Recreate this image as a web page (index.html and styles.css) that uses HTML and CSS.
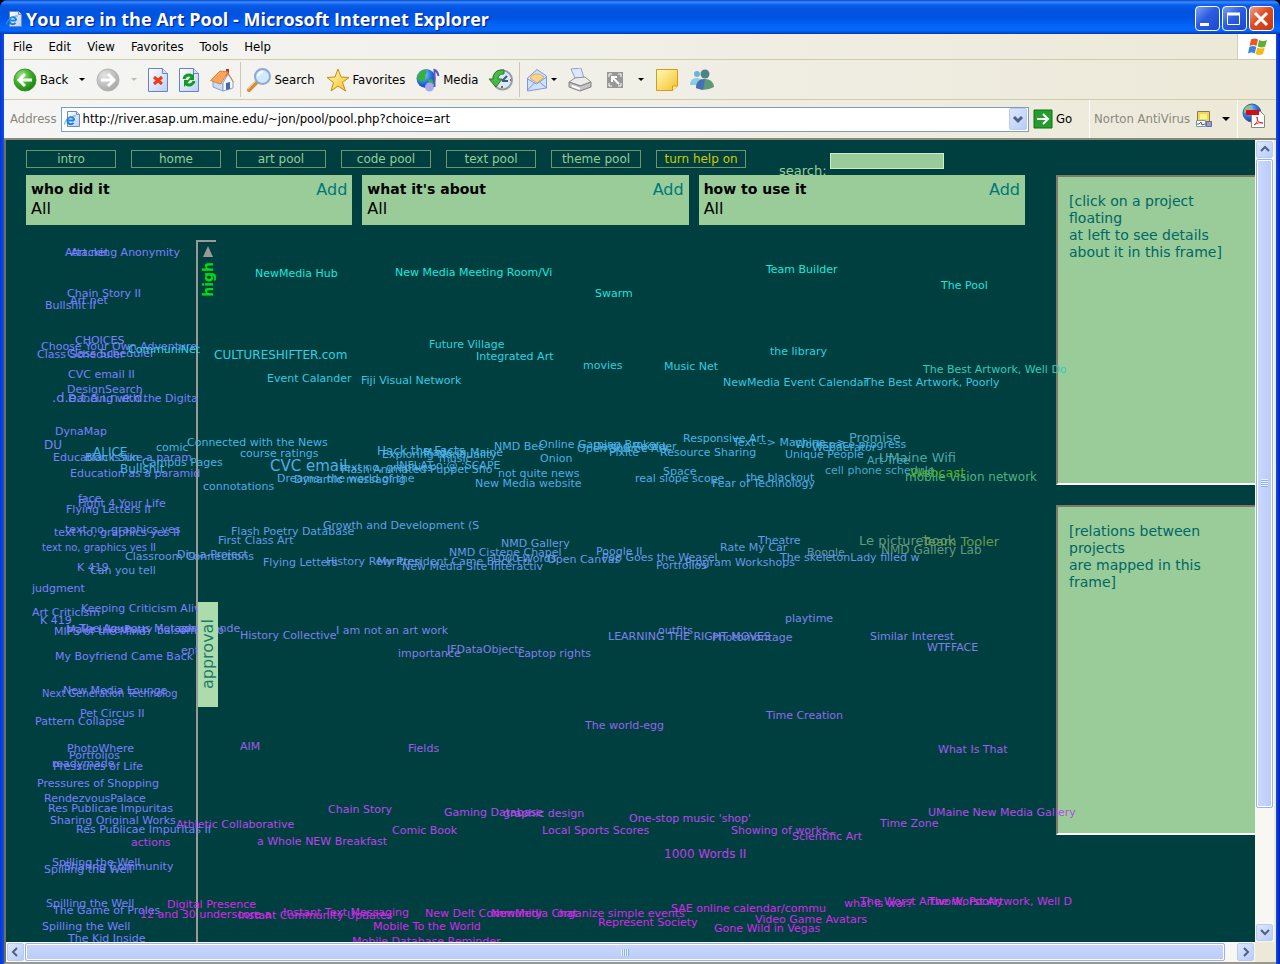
FILE: index.html
```html
<!DOCTYPE html>
<html lang="en">

<head>
  <title>You are in the Art Pool</title>
  <meta charset="utf-8" />
  <meta name="viewport" content="width=device-width, initial-scale=1.0" />
  <link rel="stylesheet" href="styles.css">
</head>

<body>
  <svg width="0" height="0" class="defs" aria-hidden="true">
    <defs>
      <radialGradient id="green" cx=".35" cy=".3" r=".8">
        <stop offset="0" stop-color="#a5e58c" />
        <stop offset=".5" stop-color="#3cb024" />
        <stop offset="1" stop-color="#14790c" />
      </radialGradient>
      <radialGradient id="grey" cx=".35" cy=".3" r=".8">
        <stop offset="0" stop-color="#e4e4e4" />
        <stop offset="1" stop-color="#a2a2a2" />
      </radialGradient>
      <radialGradient id="globe" cx=".35" cy=".3" r=".8">
        <stop offset="0" stop-color="#9cd4ff" />
        <stop offset=".5" stop-color="#2c7be0" />
        <stop offset="1" stop-color="#0a2c96" />
      </radialGradient>
      <linearGradient id="paper" x1="0" y1="0" x2="1" y2="1">
        <stop offset="0" stop-color="#ffffff" />
        <stop offset="1" stop-color="#b9d0fa" />
      </linearGradient>
      <linearGradient id="gold" x1="0" y1="0" x2="1" y2="1">
        <stop offset="0" stop-color="#fffbb8" />
        <stop offset="1" stop-color="#f6c02a" />
      </linearGradient>
    </defs>
    <symbol id="ie" viewBox="0 0 16 16">
      <path d="M3.500.5h9l3 3v12h-12z" fill="url(#paper)" stroke="#7587b5" />
      <path d="M12.500.5v3h3" fill="#dfe8fb" stroke="#7587b5" />
      <path d="M10 9.500H4.500M10.300 9.500a3.500 3.500 0 1 0-.8 2.400" fill="none" stroke="#1c7fd8" stroke-width="2" />
      <path d="M.8 13.500C-.2 10 6 4.500 12 5" fill="none" stroke="#3fa3ea" stroke-width="1" />
    </symbol>
  </svg>

  <div class="window">
    <header class="titlebar">
      <svg class="icon16"><use href="#ie" /></svg>
      <h1>You are in the Art Pool - Microsoft Internet Explorer</h1>
      <button class="win-btn" aria-label="Minimize"><svg width="22" height="22"><path d="M4 16.500h9" stroke="#fff" stroke-width="3" /></svg></button>
      <button class="win-btn" aria-label="Maximize"><svg width="22" height="22"><path d="M4.500 5.500h12v11h-12z" fill="none" stroke="#fff" /><path d="M4 6h13" stroke="#fff" stroke-width="3" /></svg></button>
      <button class="win-btn close" aria-label="Close"><svg width="22" height="22"><path d="M5 5l12 12M17 5L5 17" stroke="#fff" stroke-width="3" /></svg></button>
    </header>

    <nav class="menubar">
      <button>File</button>
      <button>Edit</button>
      <button>View</button>
      <button>Favorites</button>
      <button>Tools</button>
      <button>Help</button>
      <span class="flag">
        <svg width="20" height="18" viewBox="0 0 20 18">
          <path d="M3 1.500q3.500-2 7 0L8.500 8q-3-1.800-7 0z" fill="#e8582c" />
          <path d="M11 2q4 1.800 8 0l-1.800 6.500q-3.500 1.800-7.500 0z" fill="#5fb030" />
          <path d="M1.300 9q3.500-1.800 7 0l-1.600 6.500q-3-2-6.700 0z" fill="#3f83dc" />
          <path d="M9.300 9.500q4 1.800 7.500 0L15 16q-4 1.800-7.400 0z" fill="#f3b91c" />
        </svg>
      </span>
    </nav>

    <div class="toolbar">
      <button>
        <svg width="24" height="24"><circle cx="12" cy="12" r="11" fill="url(#green)" stroke="#3c9430" /><path d="M19 12H7M12 6l-6 6 6 6" fill="none" stroke="#fff" stroke-width="3" /></svg>
        Back
      </button>
      <button aria-label="Back history"><i class="caret"></i></button>
      <button aria-label="Forward"><svg width="24" height="24"><circle cx="12" cy="12" r="11" fill="url(#grey)" stroke="#b4b4b4" /><path d="M5 12h12M12 6l6 6-6 6" fill="none" stroke="#fff" stroke-width="3" /></svg></button>
      <button aria-label="Forward history"><i class="caret off"></i></button>
      <button aria-label="Stop"><svg width="20" height="24"><path d="M.5.500h14l5 5v18H.500z" fill="url(#paper)" stroke="#6b80c8" /><path d="M14.500.500v5h5" fill="#d5e0fa" stroke="#6b80c8" /><path d="M6 9l8 7M14 9l-8 7" stroke="#f03a10" stroke-width="3" /></svg></button>
      <button aria-label="Refresh"><svg width="20" height="24"><path d="M.5.500h14l5 5v18H.500z" fill="url(#paper)" stroke="#6b80c8" /><path d="M14.500.500v5h5" fill="#d5e0fa" stroke="#6b80c8" /><path d="M5 11c1-4 5-5 8-3M15 13c-1 4-5 5-8 3" fill="none" stroke="#159a1c" stroke-width="3" /><path d="M15 5v7h-6zM5 19v-7h6z" fill="#159a1c" /></svg></button>
      <button aria-label="Home"><svg width="24" height="24"><path d="M16 1h3v7h-3z" fill="#c03018" /><path d="M3 12l10 4v7L3 19z" fill="#c9dcf8" stroke="#8aa0cc" /><path d="M13 15l5-9 5 8v6l-10 3z" fill="#f4f8ff" stroke="#8aa0cc" /><path d="M.5 12.500L10 3l8 1-6 10-2 2z" fill="#f8a45c" stroke="#dc8440" /><path d="M17.500 4l6 10" stroke="#dc8440" stroke-width="1" /><path d="M16 15l4-1v7l-4 1z" fill="#4a68b0" /></svg></button>
      <span class="sep"></span>
      <button>
        <svg width="24" height="24"><path d="M2 22l8-8" stroke="#d98a3e" stroke-width="4" stroke-linecap="round" /><path d="M1 21l8-8" stroke="#f5c896" stroke-width="1" /><circle cx="15.500" cy="8.500" r="7.500" fill="#cfeafd" stroke="#8fa6d8" stroke-width="2" /><path d="M11 8q1-4 5-4" fill="none" stroke="#fff" stroke-width="2" /></svg>
        Search
      </button>
      <button>
        <svg width="24" height="24"><path d="M12 1l3 8 8 .5-6.500 5 3 8.500-7.500-5-7 5 2.500-8.500L1 9.500 9 9z" fill="url(#gold)" stroke="#c98a10" /></svg>
        Favorites
      </button>
      <button>
        <svg width="24" height="24"><circle cx="10" cy="10.500" r="9.500" fill="url(#globe)" /><path d="M4 4c4-4 8-2 6 2s1 5-3 7-6-3-6-4zM12 12l4-1 2 4-4 3z" fill="#35b03c" /><circle cx="13.500" cy="19" r="4.500" fill="#aaa6f0" /><path d="M18.500 19V2q3 1 4 6" fill="none" stroke="#5a58b8" stroke-width="2" /></svg>
        Media
      </button>
      <button aria-label="History"><svg width="24" height="24"><circle cx="13.500" cy="12" r="9.500" fill="#d4ecf8" stroke="#94a0a8" stroke-width="2" /><path d="M13 13l5-5M13 13h6" fill="none" stroke="#46586c" stroke-width="2" /><path d="M13 18v2M21 12h1" stroke="#e03a20" stroke-width="2" /><path d="M15 2C7 1 4 6 4 11H0l7 8 6-8H9c0-3 2-5 6-5z" fill="#4db848" stroke="#257a28" /></svg></button>
      <span class="sep"></span>
      <button aria-label="Mail"><svg width="22" height="24"><path d="M1.500 10L11 1.500 20.500 8v12l-19 3z" fill="#cfe2fc" stroke="#8296d8" /><path d="M4 10q5-8 14-1l-7 6z" fill="#fbd489" stroke="#e0a860" /><path d="M1.500 11l9 5 10-7M1.500 22l7-7M20.500 20l-7-6" fill="none" stroke="#8296d8" /></svg><i class="caret"></i></button>
      <button aria-label="Print"><svg width="24" height="24"><path d="M3 1l10-1 3 10H7z" fill="#dbe8ff" stroke="#8fa3cf" /><path d="M1 14l6-4 10-1 6 5-10 4z" fill="#ececec" stroke="#909090" /><path d="M1 14v5l11 4 11-4v-5l-11 4z" fill="#c4c4c4" stroke="#808080" /><path d="M4 18l8 3" stroke="#fff" stroke-width="2" /></svg></button>
      <button aria-label="Size"><svg width="24" height="24"><path d="M4 4h16v16H4z" fill="#989898" /><path d="M9 9l7 7M9 14V9h5" fill="none" stroke="#fff" stroke-width="2" /><path d="M6 9V6h3M15 6h3v3M6 15v3h3M15 18h3v-3" fill="none" stroke="#fff" /></svg></button>
      <button aria-label="Size options"><i class="caret"></i></button>
      <button aria-label="Discuss"><svg width="24" height="24"><path d="M1.500 1.500h21V18l-5 4.500h-16z" fill="url(#gold)" stroke="#d99a1c" /><path d="M17.500 22.500V18h5" fill="#fff3b0" stroke="#d99a1c" /></svg></button>
      <button aria-label="Messenger"><svg width="24" height="24"><circle cx="7" cy="6" r="3" fill="#6db3d8" /><path d="M0 17q0-7 7-7 6 0 6 7z" fill="#8ccbe4" /><circle cx="15" cy="6" r="4.500" fill="#4d8288" /><path d="M6 20q0-9 9-9 8 0 9 8-9 5-18 1z" fill="#5a9a78" /><path d="M6 20q0-9 9-9l-2 11z" fill="#4470b8" /></svg></button>
    </div>

    <div class="addressbar">
      <label for="address">Address</label>
      <div class="combo">
        <svg class="icon16"><use href="#ie" /></svg>
        <input id="address" type="text" value="http://river.asap.um.maine.edu/~jon/pool/pool.php?choice=art">
        <button class="xp-btn" aria-label="Show addresses"><svg width="16" height="20"><path d="M4 8l4 4 4-4" fill="none" stroke="#4d6185" stroke-width="3" /></svg></button>
      </div>
      <button class="go">
        <svg width="20" height="20"><path d="M1 1h18v18H1z" fill="#259c2c" stroke="#117018" /><path d="M4 10h10M10 5l5 5-5 5" fill="none" stroke="#fff" stroke-width="2" /></svg>
        Go
      </button>
      <div class="norton">
        Norton AntiVirus
        <svg width="16" height="16"><path d="M1.500.500h12v10h-12z" fill="#f0d850" stroke="#8a7a60" /><path d="M4 3h7v5H4z" fill="#fff28c" /><path d="M.500 9.500h9v6h-9z" fill="#fff" stroke="#48a8dc" /><path d="M1 13h2l2-2 1 3 3-1" fill="none" stroke="#e02818" /><path d="M10.500 10.500h5v5h-5z" fill="#9c9cc8" stroke="#6a6a98" /></svg>
        <i class="caret"></i>
      </div>
      <div class="pdf">
        <svg width="24" height="26"><circle cx="10" cy="10" r="9" fill="url(#globe)" stroke="#49618c" /><path d="M5 3q5-2 6 1l-4 4-5 2q0-5 3-7z" fill="#8cbf8c" /><path d="M9.500 8.500h9l4 4v12h-13z" fill="#fff" stroke="#888" /><path d="M4 7h13v5H4z" fill="#d40d14" /><path d="M12 22c4-3 4-6 3-8 0 4 2 6 6 6-3-1-6 0-9 2z" fill="none" stroke="#e0242c" /></svg>
      </div>
    </div>

    <div class="viewport">
      <div class="page">
        <main>
          <div class="topnav">
            <a href="#">intro</a>
            <a href="#">home</a>
            <a href="#">art pool</a>
            <a href="#">code pool</a>
            <a href="#">text pool</a>
            <a href="#">theme pool</a>
            <a href="#" class="help">turn help on</a>
            <form class="search">
              <label for="search">search:</label>
              <input id="search" type="text">
            </form>
          </div>
          <div class="filters">
            <section>
              <h2>who did it</h2><a href="#">Add</a>
              <p>All</p>
            </section>
            <section>
              <h2>what it's about</h2><a href="#">Add</a>
              <p>All</p>
            </section>
            <section>
              <h2>how to use it</h2><a href="#">Add</a>
              <p>All</p>
            </section>
          </div>
          <div class="pool" id="pool">
            <div class="axis">
              <svg width="10" height="11"><path d="M5 0l5 11H0z" fill="#999" /></svg>
              <span>high</span>
            </div>
            <div class="approval">approval</div>
          </div>
        </main>
        <aside>
          <div class="frame details">[click on a project floating<br>at left to see details about it in this frame]</div>
          <div class="frame relations">[relations between projects<br>are mapped in this frame]</div>
        </aside>
      </div>

      <div class="scroll vertical">
        <button class="xp-btn" aria-label="Scroll up"><svg width="14" height="15"><path d="M3 9l4-4 4 4" fill="none" stroke="#4d6185" stroke-width="2" /></svg></button>
        <div class="thumb"><i></i></div>
        <div class="rest"></div>
        <button class="xp-btn" aria-label="Scroll down"><svg width="14" height="15"><path d="M3 5l4 4 4-4" fill="none" stroke="#4d6185" stroke-width="2" /></svg></button>
      </div>
      <div class="scroll horizontal">
        <button class="xp-btn" aria-label="Scroll left"><svg width="15" height="14"><path d="M9 3L5 7l4 4" fill="none" stroke="#4d6185" stroke-width="2" /></svg></button>
        <div class="thumb"><i></i></div>
        <div class="rest"></div>
        <button class="xp-btn" aria-label="Scroll right"><svg width="15" height="14"><path d="M6 3l4 4-4 4" fill="none" stroke="#4d6185" stroke-width="2" /></svg></button>
      </div>
      <div class="corner"></div>
    </div>
  </div>

  <script src="pool.js"></script>
</body>

</html>
```

FILE: styles.css
```css
* {
  box-sizing: border-box;
}

body {
  margin: 0;
  background: #000;
  font-family: "DejaVu Sans", Verdana, sans-serif;
}

button {
  border: 0;
  padding: 0;
  background: none;
  font: inherit;
  color: inherit;
}

svg {
  display: block;
  flex: none;
}

a {
  text-decoration: none;
  color: inherit;
}

.defs {
  position: absolute;
}

.window {
  display: flex;
  flex-direction: column;
  height: 100vh;
  padding: 0 4px;
  border-radius: 8px 8px 0 0;
  overflow: hidden;
  background: linear-gradient(90deg, #0831d9, #0855dd 4px, #0855dd calc(100% - 4px), #0019c0);
}

.icon16 {
  width: 16px;
  height: 16px;
}

/* title bar */

.titlebar {
  display: flex;
  align-items: center;
  gap: 2px;
  height: 34px;
  margin: 0 -4px;
  padding: 3px 6px 0;
  background: linear-gradient(#0845c8, #3b8cff 2px, #0a5cea 5px, #0153e0 10px, #0054e3 18px, #0468fd 28px, #0464f8 31px, #0038b0);
}

.titlebar h1 {
  flex: 1;
  margin: 0 0 0 2px;
  font: bold 18px/26px "Open Sans", "Trebuchet MS", sans-serif;
  color: #fff;
  text-shadow: 1px 1px 1px #0a1883;
}

.win-btn {
  width: 25px;
  height: 25px;
  border: 1px solid #fff;
  border-radius: 4px;
  background: linear-gradient(135deg, #7ba2f0, #2c5ce0 45%, #1c48d0);
}

.win-btn.close {
  background: linear-gradient(135deg, #f0a088, #dc4c24 45%, #c43810);
}

/* browser bars */

.menubar,
.toolbar,
.addressbar {
  display: flex;
  align-items: center;
  font: 13px/16px "DejaVu Sans Condensed", Tahoma, sans-serif;
  background: linear-gradient(90deg, #f5f5f4, #ece9d8);
}

.menubar {
  height: 25px;
  gap: 16px;
  padding-left: 9px;
}

.flag {
  display: flex;
  align-items: center;
  align-self: stretch;
  margin-left: auto;
  padding: 0 8px 0 10px;
  border-left: 1px solid #d0cdb8;
  background: #fff;
}

.toolbar {
  height: 40px;
  gap: 11px;
  padding-left: 9px;
  border-top: 1px solid #d0cba8;
}

.toolbar button,
.go {
  display: flex;
  align-items: center;
  gap: 3px;
}

.sep {
  align-self: stretch;
  width: 1px;
  margin: 2px -5px;
  background: #cdc9b0;
}

.caret {
  border: 3px solid transparent;
  border-top: 3px solid #000;
  border-bottom: 0;
}

.caret.off {
  border-top-color: #bbb;
}

.addressbar {
  height: 41px;
  gap: 4px;
  padding-left: 6px;
  border-top: 1px solid #d0cba8;
  border-bottom: 2px solid #8a8878;
}

.addressbar label,
.norton {
  color: #8a887c;
}

.combo {
  display: flex;
  flex: 1;
  align-items: center;
  gap: 3px;
  height: 25px;
  padding: 1px 1px 1px 2px;
  border: 1px solid #7f9db9;
  background: #fff;
}

.combo input {
  flex: 1;
  border: 0;
  padding: 0;
  outline: 0;
  background: none;
  font: inherit;
}

.xp-btn {
  display: flex;
  align-items: center;
  justify-content: center;
  border: 1px solid #b8ccf0;
  border-radius: 2px;
  background: linear-gradient(135deg, #dce6ff, #b9cdf8);
}

.go {
  width: 52px;
}

.norton,
.pdf {
  display: flex;
  align-items: center;
  align-self: stretch;
  gap: 6px;
  padding-left: 4px;
  border-left: 1px solid #fff;
}

.norton {
  width: 144px;
}

.norton .caret {
  margin-left: 4px;
  border-width: 4px 4px 0;
}

.pdf {
  width: 39px;
  padding-bottom: 6px;
}

/* viewport with its scrollbars */

.viewport {
  flex: 1;
  display: grid;
  grid-template: minmax(0, 1fr) 20px / minmax(0, 1fr) 19px;
  min-height: 0;
  padding-right: 2px;
  border-left: 2px solid #706e60;
  border-bottom: 2px solid #9a988a;
  background: #ece9d8;
}

.scroll {
  display: flex;
  gap: 1px;
  padding: 1px;
  background: #f8f7f2;
}

.scroll .xp-btn {
  flex: none;
}

.vertical {
  flex-direction: column;
}

.vertical .xp-btn {
  height: 17px;
}

.horizontal .xp-btn {
  width: 17px;
}

.thumb {
  display: flex;
  align-items: center;
  justify-content: center;
  border: 1px solid #98b4ea;
  border-radius: 2px;
  box-shadow: inset 0 0 0 1px #fff;
}

.vertical .thumb {
  flex: 650;
  background: linear-gradient(90deg, #cbd8fd, #b8cbf8);
}

.vertical .rest {
  flex: 115;
}

.vertical i {
  width: 7px;
  height: 8px;
  background: repeating-linear-gradient(#eef4fe 0 1px, #8cb0f8 1px 2px);
}

.horizontal .thumb {
  flex: 1200;
  background: linear-gradient(#cbd8fd, #b8cbf8);
}

.horizontal .rest {
  flex: 10;
}

.horizontal i {
  width: 8px;
  height: 7px;
  background: repeating-linear-gradient(90deg, #eef4fe 0 1px, #8cb0f8 1px 2px);
}

.corner {
  background: #ece9d8;
}

/* the pool page */

.page {
  display: flex;
  gap: 31px;
  padding-left: 20px;
  overflow: hidden;
  background: #003f3f;
  color: #99cc99;
}

main {
  position: relative;
  z-index: 1;
  flex: 1;
  display: flex;
  flex-direction: column;
  min-width: 0;
}

.topnav {
  display: flex;
  align-items: flex-start;
  gap: 15px;
  height: 35px;
  padding-top: 10px;
}

.topnav a {
  flex: 0 0 90px;
  border: 1px solid #6f9570;
  font-size: 12px;
  line-height: 16px;
  text-align: center;
}

.topnav .help {
  color: #cccc00;
}

.search {
  display: flex;
  gap: 3px;
  margin: 3px 0 0 18px;
}

.search label {
  padding-top: 9px;
  font-size: 13px;
  line-height: 17px;
}

.search input {
  width: 114px;
  height: 16px;
  border: 1px solid #cceecc;
  background: #99cc99;
}

.filters {
  position: relative;
  display: flex;
  gap: 10px;
}

.filters section {
  flex: 1;
  display: grid;
  grid-template-columns: 1fr auto;
  align-content: start;
  height: 50px;
  padding: 5px;
  background: #99cc99;
  color: #000;
}

.filters h2,
.filters p {
  margin: 0;
  line-height: 19px;
}

.filters h2 {
  font-size: 14px;
}

.filters p {
  font-size: 16px;
}

.filters a {
  font-size: 16px;
  line-height: 19px;
  color: #007777;
}

aside {
  flex: 0 0 199px;
  display: flex;
  flex-direction: column;
  gap: 20px;
  padding-top: 35px;
}

.frame {
  min-height: 310px;
  padding: 16px 30px 16px 11px;
  border: 2px solid #807868;
  border-right: 0;
  border-bottom-color: #fff;
  background: #99cc99;
  color: #006666;
  font-size: 14px;
  line-height: 17px;
}

.relations {
  min-height: 330px;
}

.pool {
  position: relative;
  flex: 1;
  margin-top: 10px;
}

.axis {
  position: absolute;
  left: 170px;
  top: 5px;
  bottom: 0;
  width: 20px;
  border-left: 2px solid #999;
  border-top: 2px solid #999;
}

.axis svg {
  margin: 4px 0 0 5px;
}

.axis span,
.approval {
  writing-mode: vertical-rl;
  transform: rotate(180deg);
  line-height: 20px;
}

.axis span {
  display: block;
  width: 20px;
  margin-top: 5px;
  font-size: 14px;
  font-weight: bold;
  color: #00dd11;
}

.approval {
  position: absolute;
  z-index: 1;
  left: 172px;
  top: 367px;
  height: 105px;
  width: 20px;
  font-size: 16px;
  text-align: center;
  background: #acdcac;
  color: #1a7a6a;
}

.project {
  position: absolute;
  font-size: 11px;
  line-height: 14px;
  white-space: nowrap;
}

.project.s10 {
  font-size: 10px;
}

.project.s12 {
  font-size: 12px;
}

.project.s13 {
  font-size: 13px;
}

.project.s15 {
  font-size: 15px;
}
```

FILE: pool.js
```js
// name, x, y, font size (11 by default), colour (by approval if missing)
const unrated = "#7b80ff";

const waiting = [
  ["Attacking Anonymity", 65, 252], ["Art.net", 71, 252],
  ["Chain Story II", 67, 293], ["Art.net", 70, 300], ["Bullshit II", 45, 305],
  ["CHOICES", 75, 340], ["Choose Your Own Adventure", 41, 346],
  ["Class Scheduler", 37, 354], ["Class Scheduler", 67, 353],
  ["CVC email II", 68, 374], ["DesignSearch", 67, 389],
  [".d.e.t.a.i.n.e.d.", 52, 397, 13], ["Dancing with the Digita", 68, 398],
  ["DynaMap", 55, 431], ["DU", 44, 444, 12],
  ["Education Is like a param", 53, 457], ["Education as a paramid", 70, 473],
  ["face", 78, 498], ["Fight 4 Your Life", 78, 503], ["Flying Letters II", 66, 509],
  ["text no, graphics yes", 65, 529], ["text no, graphics yes II", 54, 532],
  ["text no, graphics yes II", 42, 547, 10],
  ["K 419", 77, 567], ["judgment", 32, 588],
  ["Keeping Criticism Alive", 81, 608], ["Art Criticism", 32, 612],
  ["K 419", 40, 620], ["The Aqueous Metaphor", 79, 628],
  ["Make Like Putty", 66, 629], ["MIPS of the Mind", 54, 631],
  ["balsomypoo", 157, 630], ["My Boyfriend Came Back", 55, 656],
  ["New Media Lounge", 63, 690], ["Next Generation Technolog", 42, 693, 10],
  ["Pet Circus II", 80, 713], ["Pattern Collapse", 35, 721],
  ["PhotoWhere", 67, 748], ["Portfolios", 69, 755], ["readymade", 52, 763],
  ["Pressures of Life", 53, 766], ["Pressures of Shopping", 37, 783],
  ["RendezvousPalace", 44, 798], ["Res Publicae Impuritas", 48, 808],
  ["Sharing Original Works", 50, 820], ["Res Publicae Impuritas II", 76, 829],
  ["Spilling the Well", 52, 862], ["Sharing Community", 64, 866],
  ["Spilling the Well", 44, 869], ["Spilling the Well", 46, 903],
  ["The Game of Proles", 53, 910], ["Spilling the Well", 42, 926],
  ["The Kid Inside", 68, 938]
];

const projects = [
  ["NewMedia Hub", 255, 273], ["New Media Meeting Room/Vi", 395, 272],
  ["Team Builder", 766, 269], ["The Pool", 941, 285], ["Swarm", 595, 293],
  ["Future Village", 429, 344], ["CommuniNet", 128, 349],
  ["the library", 770, 351], ["CULTURESHIFTER.com", 214, 354, 12],
  ["Integrated Art", 476, 356], ["movies", 583, 365], ["Music Net", 664, 366],
  ["The Best Artwork, Well Do", 923, 369, 11, "#33ccb8"],
  ["Event Calander", 267, 378], ["Fiji Visual Network", 361, 380],
  ["NewMedia Event Calendar", 723, 382], ["The Best Artwork, Poorly", 864, 382],
  ["Promise", 849, 437, 13, "#4da6c0"], ["Responsive Art", 683, 438],
  ["Connected with the News", 187, 442], ["Text --> Machine -->", 733, 442],
  ["Workspace progress", 795, 444], ["Webaerator", 812, 447],
  ["Online Gaming Broker", 539, 444], ["Daring Reorder", 593, 446],
  ["NMD Bec", 494, 446], ["comic", 156, 447], ["Open Source Ark", 577, 448],
  ["Hack the Facts", 377, 450, 12], ["ALICE", 93, 451, 12],
  ["Made in Maine", 423, 452], ["Pixite", 609, 452],
  ["Resource Sharing", 660, 452], ["course ratings", 240, 453],
  ["Exploring Nonduality", 382, 454], ["Unique People", 785, 454],
  ["Black Sun", 85, 457], ["UMaine Wifi", 879, 457, 13, "#4da6a6"],
  ["Onion", 540, 458], ["music", 439, 458],
  ["Art Tree", 867, 460, 11, "#4da6b8"], ["Campus Pages", 142, 462],
  ["CVC email", 270, 465, 15], ["INFLAT:o;@ ;SCAPE", 396, 465],
  ["text no, graphics", 340, 467], ["Bullshit", 120, 468, 12],
  ["Flash Animated Puppet Sho", 341, 469],
  ["cell phone schedule", 825, 470, 11, "#4da6c8"], ["Space", 663, 471],
  ["mobile vision network", 905, 476, 12, "#4db380"],
  ["Webcast", 910, 472, 13, "#55aa22"],
  ["not quite news", 498, 473], ["the blackout", 746, 477],
  ["Dreams: the world of the", 277, 478], ["real slope scope", 635, 478],
  ["Dynamic messaging", 294, 479], ["New Media website", 475, 483],
  ["Fear of Technology", 712, 483], ["connotations", 203, 486],
  ["Growth and Development (S", 323, 525], ["Flash Poetry Database", 231, 531],
  ["First Class Art", 218, 540], ["Theatre", 758, 540],
  ["Le picturebook", 859, 540, 13, "#669980"],
  ["Team Tooler", 922, 541, 13, "#6b9955"],
  ["NMD Gallery", 501, 543], ["Rate My Car", 720, 547],
  ["NMD Gallery Lab", 881, 549, 12, "#669980"],
  ["Poogle II", 596, 551], ["NMD Cistene Chapel", 449, 552],
  ["Boogle", 807, 552, 11, "#6694b0"], ["Dig-a-Project", 177, 554],
  ["Classroom Connections", 125, 556], ["Pop Goes the Weasel", 602, 557],
  ["The skeletonLady filled w", 780, 557], ["1000 Words", 491, 558],
  ["Open Canvas", 547, 559], ["History Rewritten", 326, 561],
  ["My President Came Back Fri", 377, 561], ["Flying Letters", 263, 562],
  ["Program Workshops", 685, 562], ["Portfolios", 656, 565],
  ["New Media Site Interactiv", 402, 566], ["Can you tell", 90, 570],
  ["playtime", 785, 618], ["comprende", 178, 628],
  ["I am not an art work", 336, 630], ["outfits", 658, 630],
  ["History Collective", 240, 635], ["LEARNING THE RIGHT MOVES", 608, 636],
  ["Similar Interest", 870, 636], ["Photomontage", 712, 637],
  ["WTFFACE", 927, 647], ["JFDataObjects", 447, 649], ["entry", 181, 650],
  ["importance", 398, 653], ["Laptop rights", 518, 653],
  ["Time Creation", 766, 715], ["The world-egg", 585, 725],
  ["AIM", 240, 746], ["Fields", 408, 748], ["What Is That", 938, 749],
  ["Chain Story", 328, 809], ["Gaming Database", 444, 812],
  ["UMaine New Media Gallery", 928, 812], ["graphic design", 503, 813],
  ["One-stop music 'shop'", 629, 818], ["Time Zone", 880, 823],
  ["Athletic Collaborative", 176, 824], ["Comic Book", 392, 830],
  ["Local Sports Scores", 542, 830], ["Showing of works..", 731, 830],
  ["Scientific Art", 792, 836], ["a Whole NEW Breakfast", 257, 841],
  ["actions", 131, 842], ["1000 Words II", 664, 853, 12],
  ["The Worst Artwork, Poorly", 860, 901], ["The Worst Artwork, Well D", 928, 901],
  ["what is war?", 844, 903], ["Digital Presence", 167, 904],
  ["SAE online calendar/commu", 671, 908], ["Instant Text Messaging", 283, 912],
  ["New Delt Community", 425, 913], ["NewMedia Chat", 491, 913],
  ["organize simple events", 557, 913], ["12 and 30 underscore a", 140, 914],
  ["Instant Community Updates", 238, 915], ["Video Game Avatars", 755, 919],
  ["Represent Society", 598, 922], ["Mobile To the World", 373, 926],
  ["Gone Wild in Vegas", 714, 928], ["Mobile Database Reminder", 352, 941]
];

const origin = { x: 26, y: 235 };
const pool = document.getElementById("pool");

// from cyan (high approval) through blue to magenta (low)
const stops = [
  [270, 26, 232, 220], [360, 48, 208, 224], [450, 77, 176, 230],
  [550, 102, 153, 230], [640, 128, 128, 235], [730, 153, 98, 235],
  [820, 184, 72, 235], [910, 216, 40, 235]
];

const colorFor = y => {
  if (y <= stops[0][0]) return `rgb(${stops[0].slice(1)})`;
  for (let i = 1; i < stops.length; i++) {
    const [low, ...from] = stops[i - 1];
    const [high, ...to] = stops[i];
    if (y <= high) {
      const t = (y - low) / (high - low);
      return `rgb(${from.map((c, k) => Math.round(c + (to[k] - c) * t))})`;
    }
  }
  return `rgb(${stops[stops.length - 1].slice(1)})`;
};

const addProject = ([name, x, y, size = 11, color = colorFor(y)]) => {
  const link = document.createElement("a");
  link.href = "#";
  link.className = `project s${size}`;
  link.textContent = name;
  link.style.left = `${x - origin.x}px`;
  link.style.top = `${y - origin.y - 6}px`;
  link.style.color = color;
  pool.appendChild(link);
};

waiting.forEach(([name, x, y, size]) => addProject([name, x, y, size, unrated]));
projects.forEach(addProject);
```
